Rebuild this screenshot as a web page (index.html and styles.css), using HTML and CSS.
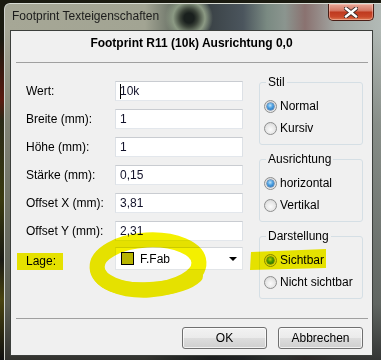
FILE: index.html
```html
<!DOCTYPE html>
<html lang="de">
<head>
<meta charset="utf-8">
<title>Footprint Texteigenschaften</title>
<link rel="stylesheet" href="styles.css">
</head>
<body>
<div class="window">
  <div class="titlebar">
    <span class="title">Footprint Texteigenschaften</span>
    <button class="close" aria-label="Schließen">
      <svg width="14" height="11" viewBox="0 0 14 11"><path d="M2 1.5 L12 9.5 M12 1.5 L2 9.5" stroke="#3a2a28" stroke-width="4.2" stroke-linecap="square"/><path d="M2 1.5 L12 9.5 M12 1.5 L2 9.5" stroke="#ffffff" stroke-width="2.4" stroke-linecap="square"/></svg>
    </button>
  </div>
  <div class="client">
    <div class="header">Footprint R11 (10k) Ausrichtung 0,0</div>
    <div class="sep"></div>
    <div class="main">
      <div class="form">
        <span class="lbl">Wert:</span><div class="input"><span class="caret"></span>10k</div>
        <span class="lbl">Breite (mm):</span><div class="input">1</div>
        <span class="lbl">Höhe (mm):</span><div class="input">1</div>
        <span class="lbl">Stärke (mm):</span><div class="input">0,15</div>
        <span class="lbl">Offset X (mm):</span><div class="input">3,81</div>
        <span class="lbl">Offset Y (mm):</span><div class="input">2,31</div>
        <span class="lbl">Lage:</span><div class="combo"><span class="swatch"></span><span class="ctext">F.Fab</span><span class="arrow"></span></div>
      </div>
      <div class="groups">
        <fieldset class="group">
          <legend>Stil</legend>
          <div class="radio"><span class="rb on"></span>Normal</div>
          <div class="radio"><span class="rb"></span>Kursiv</div>
        </fieldset>
        <fieldset class="group">
          <legend>Ausrichtung</legend>
          <div class="radio"><span class="rb on"></span>horizontal</div>
          <div class="radio"><span class="rb"></span>Vertikal</div>
        </fieldset>
        <fieldset class="group">
          <legend>Darstellung</legend>
          <div class="radio"><span class="rb on"></span>Sichtbar</div>
          <div class="radio"><span class="rb"></span>Nicht sichtbar</div>
        </fieldset>
      </div>
    </div>
    <div class="sep"></div>
    <div class="footer">
      <button class="btn">OK</button>
      <button class="btn">Abbrechen</button>
    </div>
  </div>
</div>
<svg class="marks" width="381" height="360" viewBox="0 0 381 360">
  <ellipse cx="148" cy="265" rx="51" ry="25" transform="rotate(-3 148 265)" fill="none" stroke="#f4f000" stroke-width="15"/>
  <path d="M97 266 C 98 283, 118 291, 150 289 C 172 288, 188 284, 196 276" fill="none" stroke="#f4f000" stroke-width="14" stroke-linecap="round"/>
  <rect x="17" y="253" width="46" height="17" fill="#f4f000"/>
  <polygon points="251,252 326,249 326,268 250,270" fill="#f4f000"/>
</svg>
</body>
</html>
```

FILE: styles.css
```css
html, body {
  margin: 0;
  padding: 0;
}

body {
  width: 381px;
  height: 360px;
  overflow: hidden;
  position: relative;
  font-family: "Liberation Sans", Arial, sans-serif;
  font-size: 12px;
  color: #000;
  background:
    linear-gradient(180deg, #1a1a10 0, #1a1a10 40px, #5a1a10 100px, #2a2a18 120px, #3a3a10 200px, #1a1a14 260px, #4a4410 300px, #101010 360px);
}

.window {
  margin: 3px 0 0 4px;
  width: 377px;
  height: 357px;
  box-sizing: border-box;
  border-top: 1px solid #d8dcd4;
  border-left: 1px solid #cfd2cc;
  border-top-left-radius: 6px;
  display: flex;
  flex-direction: column;
  background:
    radial-gradient(circle at 184px 14px, #1a201e 0, #1a201e 5px, #3b4339 9px, #8c9a84 16px, rgba(140,154,132,0) 24px),
    linear-gradient(180deg, rgba(0,0,0,0) 0, rgba(0,0,0,0) 26px, rgba(60,64,56,0.35) 120px, rgba(30,34,30,0.55) 300px, rgba(20,20,20,0.8) 357px),
    linear-gradient(90deg, #a6a796 0, #a2a493 140px, #6c7468 168px, #3b4347 205px, #4b555d 238px, #7a8a82 262px, #8b958f 280px, #8a7270 300px, #a2a6a2 330px, #b2bab6 377px);
}

.titlebar {
  height: 26px;
  flex: none;
  display: flex;
  align-items: flex-start;
  padding-left: 7px;
}

.title {
  line-height: 14px;
  padding-top: 5px;
  font-size: 12px;
  color: #1c1c1c;
}

.close {
  margin-left: auto;
  margin-right: 7px;
  width: 46px;
  height: 17px;
  padding: 0;
  border: 1px solid #4a1e16;
  border-top: none;
  border-radius: 0 0 5px 5px;
  background: linear-gradient(180deg, #e8a898 0, #d67a66 40%, #bf3a1f 52%, #c9482a 80%, #dc7a52 100%);
  display: flex;
  align-items: center;
  justify-content: center;
  box-shadow: inset 0 0 0 1px rgba(255,210,200,0.45);
}

.close svg {
  display: block;
}

.client {
  margin-left: 5px;
  width: 363px;
  height: 326px;
  box-sizing: border-box;
  border: 1px solid #3c3f3c;
  background: #f0f0f0;
  display: flex;
  flex-direction: column;
}

.header {
  height: 31px;
  box-sizing: border-box;
  padding-top: 5px;
  line-height: 14px;
  text-align: center;
  font-weight: bold;
  font-size: 12px;
  flex: none;
}

.sep {
  flex: none;
  margin: 0 4px 0 5px;
  border-top: 1px solid #a0a0a0;
}

.main {
  flex: 1;
  display: flex;
  align-items: flex-start;
  padding-left: 15px;
}

.form {
  margin-top: 18px;
  display: grid;
  grid-template-columns: 89px 128px;
  grid-template-rows: repeat(6, 20px) 23px;
  row-gap: 8px;
}

.lbl {
  align-self: center;
  line-height: 14px;
}

.input {
  box-sizing: border-box;
  height: 20px;
  border: 1px solid;
  border-color: #c9ccd1 #dde1e6 #e3e7ec #dde1e6;
  background: #fff;
  padding-left: 4px;
  line-height: 18px;
  color: #12122a;
  display: flex;
  align-items: center;
}

.caret {
  width: 0;
  height: 15px;
  border-left: 1px solid #000;
  margin-right: -1px;
}

.combo {
  box-sizing: border-box;
  height: 23px;
  margin-top: -2px;
  border: 1px solid;
  border-color: #d4d7db #e2e5e8 #e2e5e8 #e2e5e8;
  background: #fff;
  display: flex;
  align-items: center;
  padding: 0 5px 0 5px;
}

.swatch {
  width: 13px;
  height: 13px;
  box-sizing: border-box;
  border: 1px solid #000;
  background: #b8b400;
  margin-right: 6px;
}

.ctext {
  color: #000;
}

.arrow {
  margin-left: auto;
  width: 0;
  height: 0;
  border-left: 4px solid transparent;
  border-right: 4px solid transparent;
  border-top: 4px solid #000;
}

.groups {
  margin-left: 16px;
  margin-top: 12px;
  width: 104px;
  display: flex;
  flex-direction: column;
  gap: 7px;
}

.group {
  margin: 0;
  min-width: 0;
  box-sizing: border-box;
  width: 104px;
  padding: 0 4px 5px 4px;
  border: 1px solid #d5dfe5;
  border-radius: 3px;
}

.group legend {
  margin-left: 2px;
  padding: 0 2px;
  line-height: 14px;
  font-size: 12px;
}

.radio {
  display: flex;
  align-items: center;
  height: 22px;
  gap: 3px;
  white-space: nowrap;
}

.radio:first-of-type {
  margin-top: 6px;
}

.rb {
  position: relative;
  width: 13px;
  height: 13px;
  box-sizing: border-box;
  border-radius: 50%;
  border: 1px solid #8e8f8f;
  background: radial-gradient(circle at 50% 60%, #fbfbfb 0, #e6e6e6 55%, #cfcfcf 100%);
  flex: none;
}

.rb.on::after {
  content: "";
  position: absolute;
  left: 2px;
  top: 2px;
  width: 7px;
  height: 7px;
  border-radius: 50%;
  background: radial-gradient(circle at 45% 35%, #bfe3fa 0, #4a9ee0 45%, #1a5fa8 100%);
  box-shadow: 0 0 0 0.5px #2a5a90;
}

.footer {
  flex: none;
  height: 36px;
  box-sizing: border-box;
  display: flex;
  justify-content: flex-end;
  gap: 11px;
  padding: 8px 9px 0 0;
}

.btn {
  width: 85px;
  height: 22px;
  box-sizing: border-box;
  border: 1px solid #707070;
  border-radius: 3px;
  background: linear-gradient(180deg, #f2f2f2 0, #ebebeb 48%, #dddddd 52%, #cfcfcf 100%);
  box-shadow: inset 0 0 0 1px rgba(255,255,255,0.7);
  font-family: "Liberation Sans", Arial, sans-serif;
  font-size: 12px;
  color: #000;
  padding: 0;
}

.marks {
  position: absolute;
  left: 0;
  top: 0;
  pointer-events: none;
  mix-blend-mode: multiply;
}
```
